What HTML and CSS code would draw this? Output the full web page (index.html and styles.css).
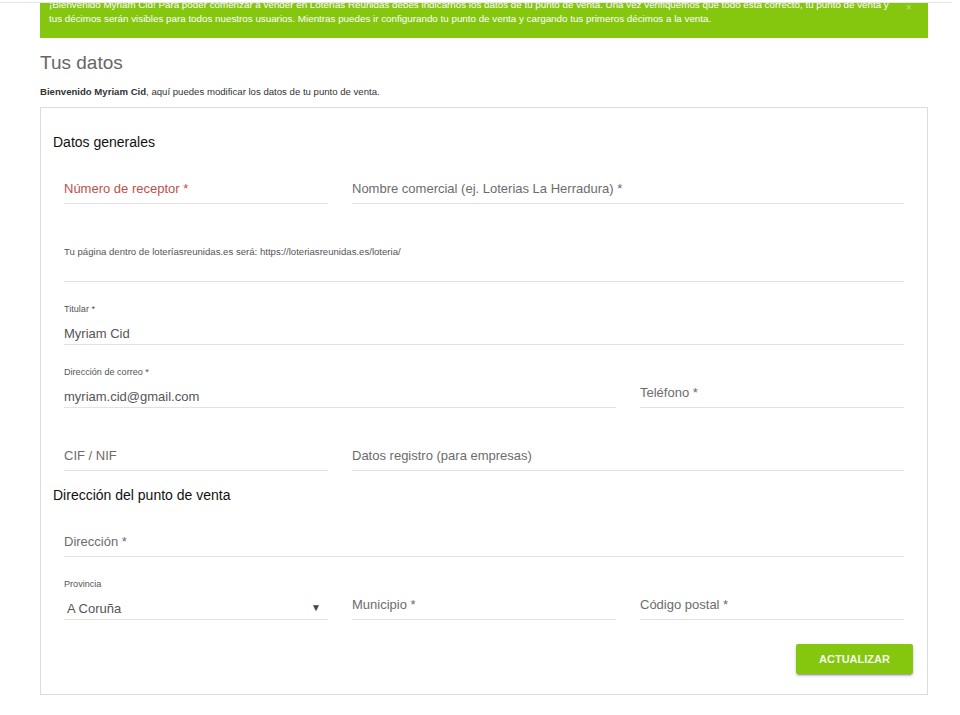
FILE: index.html
```html
<!DOCTYPE html>
<html lang="es">
<head>
<meta charset="utf-8">
<title>Tus datos</title>
<link rel="stylesheet" href="styles.css">
</head>
<body>
<div class="topbar"></div>
<div class="page">
  <div class="banner">
    <span class="bline">¡Bienvenido Myriam Cid! Para poder comenzar a vender en Loterías Reunidas debes indicarnos los datos de tu punto de venta. Una vez verifiquemos que todo está correcto, tu punto de venta y</span>
    <span class="bline">tus décimos serán visibles para todos nuestros usuarios. Mientras puedes ir configurando tu punto de venta y cargando tus primeros décimos a la venta.</span>
    <span class="close">×</span>
  </div>
  <h1 class="title">Tus datos</h1>
  <p class="intro"><b>Bienvenido Myriam Cid</b>, aquí puedes modificar los datos de tu punto de venta.</p>
  <form class="card">
    <h2 class="section">Datos generales</h2>
    <div class="row r1">
      <div class="field"><div class="line"><span class="invalid">Número de receptor *</span></div></div>
      <div class="field span2"><div class="line">Nombre comercial (ej. Loterias La Herradura) *</div></div>
    </div>
    <div class="row r2">
      <div class="field span3">
        <div class="small help">Tu página dentro de loteríasreunidas.es será: https://loteriasreunidas.es/loteria/</div>
        <div class="line short"></div>
      </div>
    </div>
    <div class="row r3">
      <div class="field span3">
        <div class="small">Titular *</div>
        <div class="line val">Myriam Cid</div>
      </div>
    </div>
    <div class="row r4">
      <div class="field span2">
        <div class="small">Dirección de correo *</div>
        <div class="line val">myriam.cid@gmail.com</div>
      </div>
      <div class="field"><div class="line">Teléfono *</div></div>
    </div>
    <div class="row r5">
      <div class="field"><div class="line">CIF / NIF</div></div>
      <div class="field span2"><div class="line">Datos registro (para empresas)</div></div>
    </div>
    <h2 class="section s2">Dirección del punto de venta</h2>
    <div class="row r1">
      <div class="field span3"><div class="line">Dirección *</div></div>
    </div>
    <div class="row r3">
      <div class="field">
        <div class="small">Provincia</div>
        <div class="line val select"><span class="sel-text">A Coruña</span><span class="caret">▼</span></div>
      </div>
      <div class="field"><div class="line">Municipio *</div></div>
      <div class="field"><div class="line">Código postal *</div></div>
    </div>
    <div class="actions">
      <button type="button" class="btn">ACTUALIZAR</button>
    </div>
  </form>
</div>
</body>
</html>
```
FILE: styles.css
```css
* { box-sizing: border-box; }
body {
  margin: 0;
  background: #fff;
  font-family: "Liberation Sans", Arial, sans-serif;
}
.topbar {
  position: fixed;
  top: 0;
  left: 0;
  width: 952px;
  height: 3px;
  background: #fff;
  border-bottom: 1px solid #e6e6e6;
  z-index: 5;
}
.page {
  margin: 0 32px 0 40px;
}
.banner {
  position: relative;
  margin-top: -10px;
  background: #85c60f;
  color: #fff;
  font-size: 9.8px;
  line-height: 14px;
  padding: 8px 30px 12px 9px;
}
.bline {
  display: block;
  white-space: nowrap;
}
.close {
  position: absolute;
  right: 16px;
  top: 12px;
  font-size: 11px;
  line-height: 11px;
  color: rgba(255, 255, 255, 0.45);
}
.title {
  margin: 14px 0 0;
  font-size: 19px;
  line-height: 22px;
  font-weight: normal;
  color: #666;
}
.intro {
  margin: 12px 0 0;
  font-size: 9.6px;
  line-height: 12px;
  color: #333;
}
.card {
  margin: 9px 0 0;
  border: 1px solid #ddd;
  padding: 25px 11px 20px;
}
.section {
  margin: 0;
  padding-left: 1px;
  font-size: 14px;
  line-height: 18px;
  font-weight: normal;
  color: #111;
}
.s2 { margin-top: 15px; }
.row {
  display: grid;
  grid-template-columns: repeat(3, 1fr);
  align-items: end;
}
.r1 { margin-top: 23px; }
.r2 { margin-top: 42px; }
.r3 { margin-top: 21px; }
.r4 { margin-top: 21px; }
.r5 { margin-top: 33px; }
.field { padding: 0 12px; min-width: 0; }
.span2 { grid-column: span 2; }
.span3 { grid-column: span 3; }
.small {
  font-size: 9.1px;
  line-height: 12px;
  color: #555;
  white-space: nowrap;
}
.small.help { font-size: 9.6px; }
.line {
  height: 30px;
  border-bottom: 1px solid #e2e2e2;
  font-size: 13px;
  line-height: 29px;
  color: #6c6c6c;
  white-space: nowrap;
}
.line.short { height: 24px; }
.line.val {
  padding-top: 9px;
  line-height: 20px;
  color: #555;
}
.invalid { color: #c0504a; }
.select {
  display: flex;
  justify-content: space-between;
  padding-left: 3px;
  padding-right: 7px;
}
.caret {
  font-size: 10px;
  color: #444;
  line-height: 18px;
}
.actions {
  display: flex;
  justify-content: flex-end;
  margin-top: 24px;
  padding-right: 3px;
}
.btn {
  width: 117px;
  height: 30px;
  background: #85c60f;
  color: #f3f9ea;
  font-family: "Liberation Sans", Arial, sans-serif;
  font-weight: bold;
  font-size: 11px;
  border: none;
  border-radius: 2px;
  box-shadow: 0 2px 2px rgba(0,0,0,0.14), 0 1px 5px rgba(0,0,0,0.12), 0 3px 1px -2px rgba(0,0,0,0.2);
  padding: 0;
}
```
